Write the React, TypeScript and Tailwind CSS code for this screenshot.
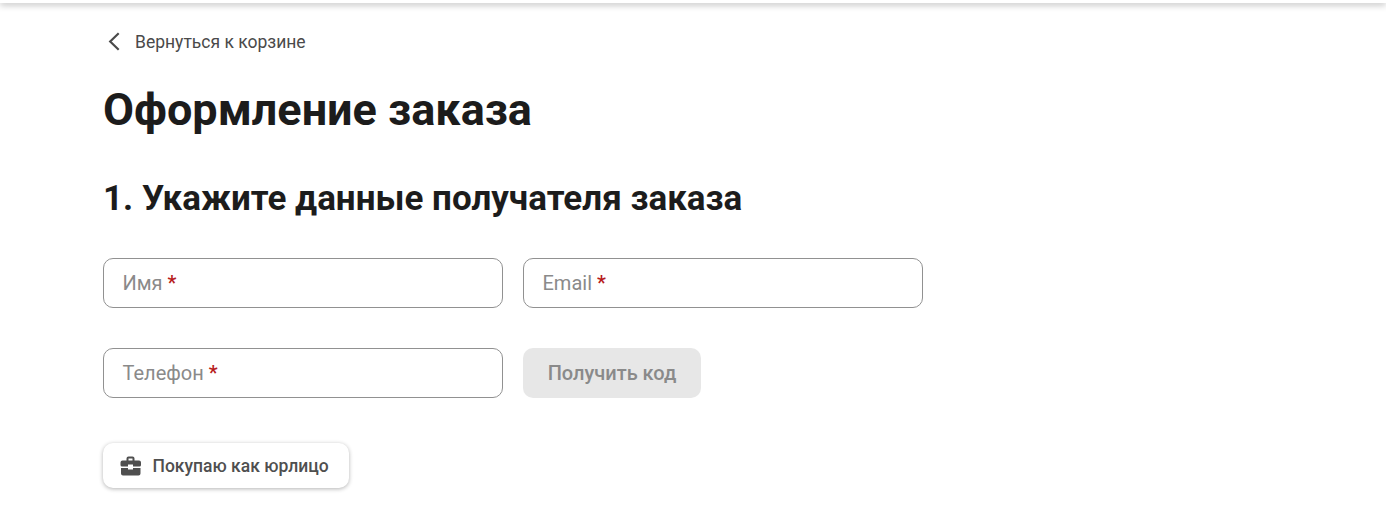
interface FieldProps {
  label: string;
  type: string;
}

const Field: React.FC<FieldProps> = ({ label, type }) => {
  return (
    <label className="relative flex h-[50px] w-[400px] items-center rounded-[10px] border border-[#919191] px-[18.5px] text-[20px] text-[#8a8a8a]">
      <span>
        {label} <span className="font-medium text-[#b71c1c]">*</span>
      </span>
      <input type={type} className="absolute inset-0 bg-transparent px-[19px] outline-none" />
    </label>
  );
};

const ChevronIcon = () => (
  <svg className="mr-[13px] ml-[3px] h-5 w-4 shrink-0" viewBox="0 0 16 20" fill="none" stroke="currentColor" strokeWidth="2.2">
    <path d="M12.700 1.300 4.200 9.500l8.500 8.200" />
  </svg>
);

const BriefcaseIcon = () => (
  <svg className="mr-[11px] h-5 w-[22px] shrink-0" viewBox="0 0 22 20" fill="currentColor">
    <path
      fillRule="evenodd"
      d="M8.500.5h4a2 2 0 0 1 2 2V4.500h4.500a2 2 0 0 1 2 2V9a1.500 1.500 0 0 1-1.500 1.500H13V8.500H8v2H2A1.500 1.500 0 0 1 .5 9V6.500a2 2 0 0 1 2-2h4V2.500a2 2 0 0 1 2-2ZM8.500 2.500v2h4v-2h-4Z"
    />
    <path d="M1 12h7v1.500h5V12h7.500v5.500a2 2 0 0 1-2 2H3a2 2 0 0 1-2-2Z" />
  </svg>
);

export default function App() {
  return (
    <div className="h-[528px] overflow-hidden bg-white font-['Roboto',sans-serif] text-[#1c1c1c]">
      <div className="h-[3px] bg-white shadow-[0_1px_7px_rgba(0,0,0,0.45)]" />
      <main className="px-[103px] pt-[27px]">
        <a href="#" className="flex h-6 items-center text-[17.5px] text-[#4a4a4a]">
          <ChevronIcon />
          Вернуться к корзине
        </a>
        <h1 className="mt-[29px] text-[45px] leading-[54px] font-bold">Оформление заказа</h1>
        <h2 className="mt-10 text-[35px] leading-[44px] font-bold">1. Укажите данные получателя заказа</h2>
        <div className="mt-[37px] flex gap-5">
          <Field label="Имя" type="text" />
          <Field label="Email" type="email" />
        </div>
        <div className="mt-10 flex gap-5">
          <Field label="Телефон" type="tel" />
          <button className="h-[50px] w-[178px] rounded-[10px] bg-[#e7e7e7] text-[20px] font-medium text-[#8a8a8a]">
            Получить код
          </button>
        </div>
        <button className="mt-[45px] flex h-[45px] w-[246px] items-center rounded-[10px] bg-white pl-[16.5px] text-[17.5px] font-medium text-[#4f4f4f] shadow-[0_1px_4px_rgba(0,0,0,0.3)]">
          <BriefcaseIcon />
          <span className="pt-px">Покупаю как юрлицо</span>
        </button>
      </main>
    </div>
  );
}
